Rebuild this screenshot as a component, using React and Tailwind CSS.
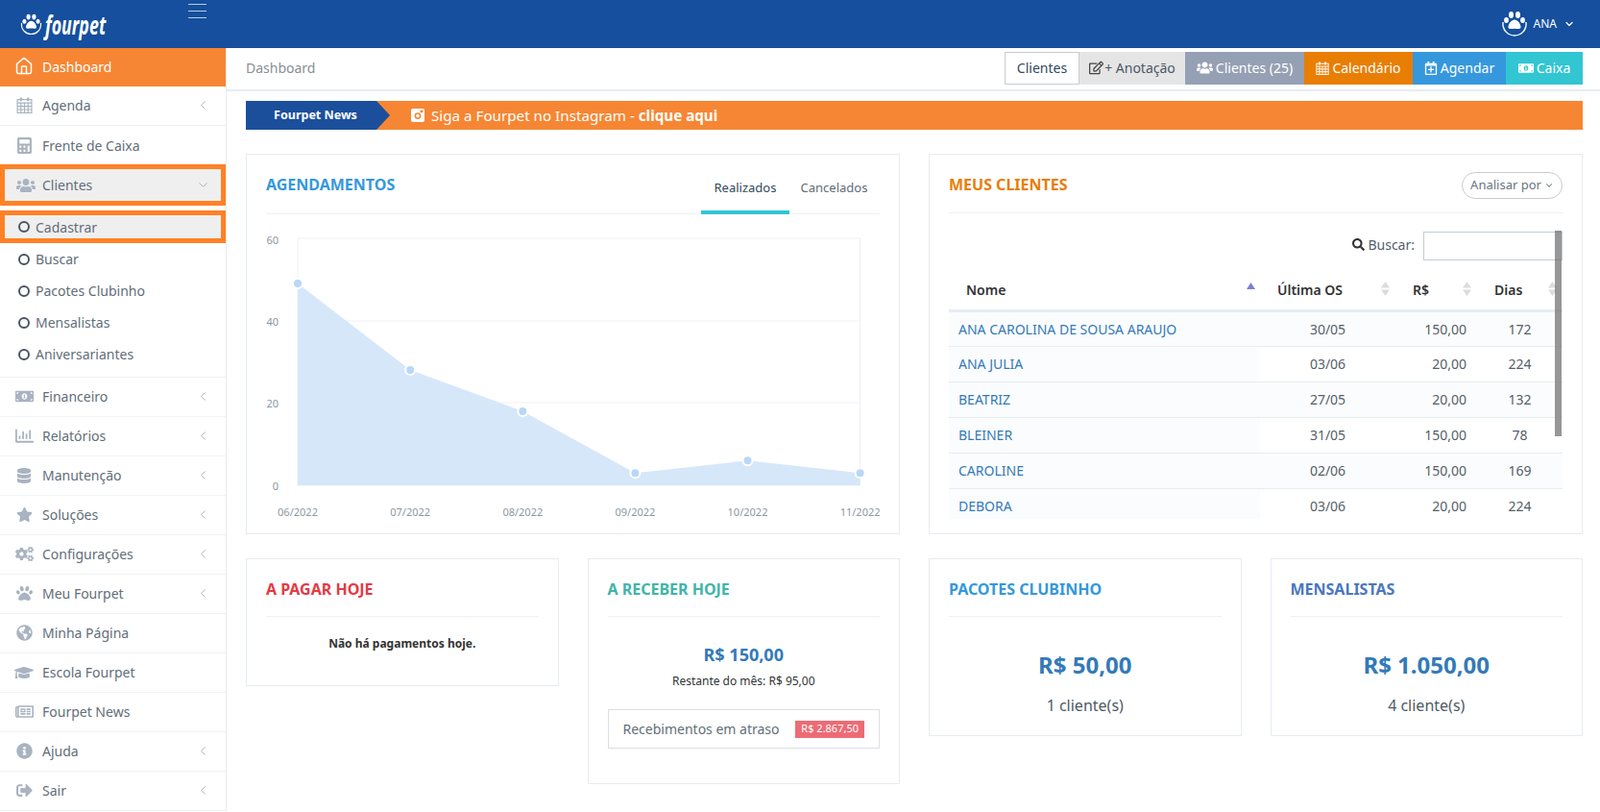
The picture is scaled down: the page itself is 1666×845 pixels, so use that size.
import React from "react";
import {
  FaCalculator, FaUsers, FaMoneyBillAlt, FaRegChartBar, FaDatabase, FaStar, FaCogs, FaPaw,
  FaGlobeAmericas, FaGraduationCap, FaRegNewspaper, FaInfoCircle, FaSignOutAlt, FaRegEdit, FaRegCalendarPlus,
  FaSearch,
} from "react-icons/fa";
import { ChevronLeft, ChevronDown, Home } from "lucide-react";

function PawLogo({ size = 26 }) {
  return (
    <svg width={size} height={size} viewBox="0 0 30 30" fill="none">
      <path d="M3 13 C2 22 9 27 15 27 C21 27 28 22 27 13" stroke="#fff" strokeWidth="1.4" />
      <g fill="#fff">
        <ellipse cx="6.5" cy="11" rx="2.4" ry="3" />
        <ellipse cx="11.5" cy="5.5" rx="2.5" ry="3.4" />
        <ellipse cx="18.5" cy="5.5" rx="2.5" ry="3.4" />
        <ellipse cx="23.5" cy="11" rx="2.4" ry="3" />
        <path d="M15 10.5 C11.5 10.5 8 16 8.5 18.5 C9 21 12.5 19.8 15 19.8 C17.5 19.8 21 21 21.5 18.5 C22 16 18.5 10.5 15 10.5Z" />
      </g>
    </svg>
  );
}

function CalGrid({ size = 16 }) {
  return (
    <svg width={size} height={size} viewBox="0 0 16 16" fill="none" stroke="currentColor" strokeWidth="1.1">
      <rect x="1" y="2.5" width="14" height="13" />
      <path d="M1 5.8 H15 M1 9 H15 M1 12.2 H15 M4.5 5.8 V15.5 M8 5.8 V15.5 M11.5 5.8 V15.5" />
      <path d="M4.5 0.5 V4 M11.5 0.5 V4" strokeWidth="2" />
    </svg>
  );
}

function InstaIcon() {
  return (
    <svg width="14" height="14" viewBox="0 0 14 14" className="mr-[7px]">
      <rect width="14" height="14" rx="2" fill="#fff" />
      <circle cx="7" cy="7.6" r="3.4" fill="#f68633" />
      <circle cx="7" cy="7.6" r="1.8" fill="#fff" />
      <rect x="9.6" y="1.6" width="2.8" height="2.6" fill="#f68633" />
    </svg>
  );
}

function NavRow({ icon: I, label, chevron = true, size = 17 }) {
  return (
    <div className="h-[41px] flex items-center border-b border-[#eff3f7] text-[14px] text-[#626e79] pb-[1px]">
      <span className="w-[44px] flex justify-center pl-[12px] pr-[6px] text-[#a9b3c1]">
        <I size={size} />
      </span>
      <span className="flex-1">{label}</span>
      {chevron && <ChevronLeft size={15} className="mr-[16px] text-[#a5aeb8]" strokeWidth={1.5} />}
    </div>
  );
}

function SubRow({ label }) {
  return (
    <div className="h-[33px] flex items-center text-[14px] text-[#626e79] pl-[19px]">
      <span className="w-[12px] h-[12px] mr-[6px] rounded-full border-2 border-[#4a5560]" />
      <span>{label}</span>
    </div>
  );
}

function Sidebar() {
  return (
    <aside className="w-[236px] shrink-0 border-r border-[#e7ecf1] bg-white">
      <div className="h-[40px] bg-[#f68633] text-white flex items-center text-[14px] pb-[2px]">
        <span className="w-[44px] flex justify-center pl-[10px] pr-[4px]"><Home size={20} strokeWidth={1.8} /></span>
        Dashboard
      </div>
      <NavRow icon={CalGrid} label="Agenda" />
      <div className="h-[40px] flex items-center text-[14px] text-[#626e79]">
        <span className="w-[44px] flex justify-center pl-[12px] pr-[6px] text-[#a9b3c1]"><FaCalculator size={17} /></span>
        Frente de Caixa
      </div>
      <div className="h-[43px] border-[5px] border-[#ff8126] bg-[#efefef] flex items-center text-[14px] text-[#626e79]">
        <span className="w-[39px] flex justify-center pl-[6px] pr-[1px] text-[#a9b3c1]"><FaUsers size={20} /></span>
        <span className="flex-1">Clientes</span>
        <ChevronDown size={15} className="mr-[11px] text-[#a5aeb8]" strokeWidth={1.5} />
      </div>
      <div className="border-b border-[#eff3f7] h-[179px] pt-[5px]">
        <div className="h-[34px] border-[5px] border-[#ff8126] bg-[#efefef] flex items-center text-[14px] text-[#626e79] pl-[14px]">
          <span className="w-[12px] h-[12px] mr-[6px] rounded-full border-2 border-[#4a5560]" />
          Cadastrar
        </div>
        <SubRow label="Buscar" />
        <SubRow label="Pacotes Clubinho" />
        <SubRow label="Mensalistas" />
        <SubRow label="Aniversariantes" />
      </div>
      <NavRow icon={FaMoneyBillAlt} label="Financeiro" size={19} />
      <NavRow icon={FaRegChartBar} label="Relatórios" size={19} />
      <NavRow icon={FaDatabase} label="Manutenção" size={16} />
      <NavRow icon={FaStar} label="Soluções" />
      <NavRow icon={FaCogs} label="Configurações" size={19} />
      <NavRow icon={FaPaw} label="Meu Fourpet" />
      <NavRow icon={FaGlobeAmericas} label="Minha Página" chevron={false} />
      <NavRow icon={FaGraduationCap} label="Escola Fourpet" size={20} chevron={false} />
      <NavRow icon={FaRegNewspaper} label="Fourpet News" size={19} chevron={false} />
      <NavRow icon={FaInfoCircle} label="Ajuda" />
      <NavRow icon={FaSignOutAlt} label="Sair" />
    </aside>
  );
}

function Chart() {
  const xs = [33, 150.2, 267.3, 384.4, 501.5, 618.6];
  const vals = [49, 28, 18, 3, 6, 3];
  const base = 282;
  const unit = 257 / 60;
  const ys = vals.map((v) => base - v * unit);
  const labels = ["06/2022", "07/2022", "08/2022", "09/2022", "10/2022", "11/2022"];
  const pts = xs.map((x, i) => `${x},${ys[i]}`).join(" ");
  return (
    <svg width="640" height="330" viewBox="0 0 640 330" className="block">
      <rect x="33" y="25" width="585.6" height="257" fill="none" stroke="#eef1f5" />
      <line x1="33" x2="618.6" y1="111" y2="111" stroke="#eef1f5" />
      <line x1="33" x2="618.6" y1="196" y2="196" stroke="#eef1f5" />
      <polygon points={`33,${base} ${pts} 618.6,${base}`} fill="#d6e7fa" />
      {xs.map((x, i) => (
        <circle key={i} cx={x} cy={ys[i]} r="5" fill="#b9d7f6" stroke="#fff" strokeWidth="2" />
      ))}
      {[["60", 31], ["40", 116], ["20", 201], ["0", 287]].map(([t, y]) => (
        <text key={t} x="13" y={y} textAnchor="end" fontSize="11" fill="#8b98a5">{t}</text>
      ))}
      {labels.map((t, i) => (
        <text key={t} x={xs[i]} y="314" textAnchor="middle" fontSize="11" fill="#8b98a5">{t}</text>
      ))}
    </svg>
  );
}

function SortIcon({ active = false }) {
  if (active) {
    return (
      <svg width="9" height="7" viewBox="0 0 9 7" className="absolute right-[5px] top-[23px]">
        <path d="M4.5 0 L9 7 L0 7Z" fill="#7b7fd8" />
      </svg>
    );
  }
  return (
    <svg width="9" height="15" viewBox="0 0 9 15" className="absolute right-[6px] top-[22px]">
      <path d="M4.5 0 L9 6.5 L0 6.5Z M4.5 15 L0 8.5 L9 8.5Z" fill="#dcdcdc" />
    </svg>
  );
}

const rows = [
  ["ANA CAROLINA DE SOUSA ARAUJO", "30/05", "150,00", "172"],
  ["ANA JULIA", "03/06", "20,00", "224"],
  ["BEATRIZ", "27/05", "20,00", "132"],
  ["BLEINER", "31/05", "150,00", "78"],
  ["CAROLINE", "02/06", "150,00", "169"],
  ["DEBORA", "03/06", "20,00", "224"],
];

function ClientsTable() {
  return (
    <div className="relative h-[300px] pt-[19px]">
      <div className="flex items-center justify-end h-[30px] text-[14px] text-[#55606b]">
        <FaSearch size={13} className="text-[#333] mr-[3px] mb-[4px]" />
        <span className="mb-[4px]">Buscar:</span>
        <div className="w-[145px] h-[30px] ml-[9px] border border-[#c2cad8] bg-white" />
      </div>
      <div className="h-[269px] overflow-hidden">
        <table className="w-[639px] table-fixed border-collapse text-[14px] text-[#555e68]">
          <colgroup>
            <col className="w-[324px]" />
            <col className="w-[141px]" />
            <col className="w-[85px]" />
            <col className="w-[89px]" />
          </colgroup>
          <thead>
            <tr className="h-[52px] border-b-[3px] border-[#e7ecf1] text-[#333] font-semibold text-left">
              <th className="relative pl-[18px] pt-[11px] font-semibold"><span>Nome</span><SortIcon active /></th>
              <th className="relative pl-[18px] pt-[11px] font-semibold"><span>Última OS</span><SortIcon /></th>
              <th className="relative pl-[18px] pt-[11px] font-semibold"><span>R$</span><SortIcon /></th>
              <th className="relative pl-[18px] pt-[11px] font-semibold"><span>Dias</span><SortIcon /></th>
            </tr>
          </thead>
          <tbody>
            {rows.map((r, i) => (
              <tr key={r[0]} className={"h-[37px] border-b border-[#e7ecf1] " + (i % 2 === 0 ? "bg-[#fbfcfd]" : "bg-white")}>
                <td className="pl-[10px] text-[#337ab7] bg-[#fbfcfd]">{r[0]}</td>
                <td className="text-center">{r[1]}</td>
                <td className="text-right pr-[11px]">{r[2]}</td>
                <td className="text-center">{r[3]}</td>
              </tr>
            ))}
          </tbody>
        </table>
      </div>
      <div className="absolute right-px top-[18px] w-[7px] h-[214px] bg-[#6b6b6b]/70" />
    </div>
  );
}

function SmallCard({ title, color, children, height }) {
  return (
    <div className={"border border-[#e7ecf1] bg-white px-[20px] " + height}>
      <div className={"h-[60px] border-b border-[#eef1f5] flex items-center text-[16px] font-bold pt-[3px] " + color}>{title}</div>
      {children}
    </div>
  );
}

function Stat({ value, sub }) {
  return (
    <div className="text-center pt-[32px]">
      <div className="text-[24px] font-bold text-[#337ab7] leading-[36px]">{value}</div>
      <div className="text-[16px] text-[#4f5b66] mt-[12px] leading-[24px]">{sub}</div>
    </div>
  );
}

function Btn({ className, children }) {
  return <div className={"h-[34px] flex items-center justify-center pb-[1px] text-[14px] " + className}>{children}</div>;
}

export default function App() {
  return (
    <div className="h-[845px] overflow-hidden bg-white [font-family:'Open_Sans',sans-serif]">
      <header className="h-[50px] bg-[#154f9d] flex relative text-white">
        <div className="w-[235px] flex items-start">
          <div className="flex items-center h-[50px] pl-[20px] gap-[2px]">
            <PawLogo size={25} />
            <span className="inline-block w-[66px] origin-left scale-x-[0.66] [font-family:'Liberation_Serif',serif] italic font-bold text-[27px] leading-none">fourpet</span>
          </div>
          <div className="ml-auto mr-[20px] mt-[4px] w-[19px] flex flex-col gap-[6px]">
            <span className="h-px bg-white/70" />
            <span className="h-px bg-white/70" />
            <span className="h-px bg-white/70" />
          </div>
        </div>
        <div className="ml-auto flex items-center pr-[26px]">
          <PawLogo size={30} />
          <span className="ml-[5px] text-[12px]">ANA</span>
          <ChevronDown size={12} className="ml-[7px]" strokeWidth={2.5} />
        </div>
      </header>
      <div className="flex">
        <Sidebar />
        <main className="flex-1 min-w-0">
          <div className="h-[45px] border-b-2 border-[#e7ecf1] flex items-start pl-[20px] pr-[18px]">
            <div className="h-[40px] flex items-center text-[14px] text-[#888f96]">Dashboard</div>
            <div className="ml-auto mt-[4px] flex">
              <Btn className="w-[78px] border border-[#c9ccd0] text-[#34495e] bg-white">Clientes</Btn>
              <Btn className="w-[110px] gap-[1px] bg-[#e5e5e5] text-[#4b5867]"><FaRegEdit size={15} className="text-[#444]" />+ Anotação</Btn>
              <Btn className="w-[124px] gap-[3px] bg-[#95a0b4] text-white"><FaUsers size={17} />Clientes (25)</Btn>
              <Btn className="w-[113px] gap-[3px] bg-[#e87e04] text-white"><CalGrid size={14} />Calendário</Btn>
              <Btn className="w-[97px] gap-[3px] bg-[#3598dc] text-white"><FaRegCalendarPlus size={14} />Agendar</Btn>
              <Btn className="w-[80px] gap-[3px] bg-[#32c5d2] text-white"><FaMoneyBillAlt size={16} />Caixa</Btn>
            </div>
          </div>
          <div className="pl-[20px] pr-[18px] pt-[10px]">
            <div className="h-[30px] flex bg-[#f68633] text-white">
              <div className="w-[136px] bg-[#1b4f9c] flex items-center justify-center pl-[9px] text-[12.5px] font-bold">Fourpet News</div>
              <svg width="14" height="30" viewBox="0 0 14 30" className="block"><path d="M0 0 L14 15 L0 30Z" fill="#1b4f9c" /></svg>
              <div className="flex items-center text-[15.2px] pl-[22px]">
                <InstaIcon />
                <span>Siga a Fourpet no Instagram - <b className="font-bold">clique aqui</b></span>
              </div>
            </div>

            <div className="grid grid-cols-2 gap-[30px] mt-[25px]">
              <section className="h-[396px] border border-[#e7ecf1] px-[20px]">
                <div className="h-[62px] border-b border-[#eef1f5] flex items-start justify-between">
                  <h2 className="text-[16px] font-bold text-[#3598dc] mt-[20px] leading-[22px]">AGENDAMENTOS</h2>
                  <div className="flex text-[13px] mr-[1px]">
                    <div className="w-[92px] h-[62px] border-b-4 border-[#32c5d2] flex items-center justify-center text-[#34495e] pt-[11px]">Realizados</div>
                    <div className="w-[93px] h-[62px] flex items-center justify-center text-[#5f6b77] pt-[8px]">Cancelados</div>
                  </div>
                </div>
                <Chart />
              </section>
              <section className="h-[396px] border border-[#e7ecf1] px-[20px]">
                <div className="h-[61px] border-b border-[#eef1f5] flex items-start justify-between">
                  <h2 className="text-[16px] font-bold text-[#e87e04] mt-[20px] leading-[22px]">MEUS CLIENTES</h2>
                  <div className="mt-[18px] h-[28px] w-[105px] rounded-full border border-[#c9ccd0] flex items-center justify-center gap-[3px] text-[13px] text-[#6a7480]">
                    Analisar por <ChevronDown size={10} strokeWidth={2.5} />
                  </div>
                </div>
                <ClientsTable />
              </section>
            </div>

            <div className="grid grid-cols-4 gap-[30px] mt-[25px] items-start">
              <SmallCard title="A PAGAR HOJE" color="text-[#e43a45]" height="h-[133px]">
                <div className="text-center text-[12px] font-bold text-[#333] pt-[19px]">Não há pagamentos hoje.</div>
              </SmallCard>
              <SmallCard title="A RECEBER HOJE" color="text-[#3fb5a8]" height="h-[235px]">
                <div className="text-center pt-[26px]">
                  <div className="text-[18px] font-bold text-[#337ab7] leading-[26px]">R$ 150,00</div>
                  <div className="text-[12px] text-[#333] mt-[5px] leading-[20px]">Restante do mês: R$ 95,00</div>
                </div>
                <div className="mt-[19px] h-[41px] border border-[#dcdfe3] flex items-center justify-between pl-[15px] pr-[15px] text-[14px] text-[#626e79]">
                  <span>Recebimentos em atraso</span>
                  <span className="h-[18px] px-[6px] bg-[#ed6b75] text-white text-[11px] flex items-center">R$ 2.867,50</span>
                </div>
              </SmallCard>
              <SmallCard title="PACOTES CLUBINHO" color="text-[#3598dc]" height="h-[185px]">
                <Stat value="R$ 50,00" sub="1 cliente(s)" />
              </SmallCard>
              <SmallCard title="MENSALISTAS" color="text-[#4b77be]" height="h-[185px]">
                <Stat value="R$ 1.050,00" sub="4 cliente(s)" />
              </SmallCard>
            </div>
          </div>
        </main>
      </div>
    </div>
  );
}
